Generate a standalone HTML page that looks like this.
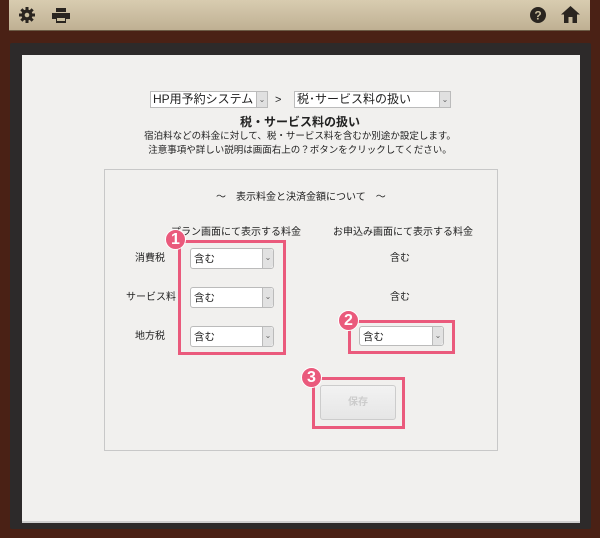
<!DOCTYPE html>
<html><head><meta charset="utf-8"><style>
*{margin:0;padding:0;box-sizing:border-box}
body{width:600px;height:538px;overflow:hidden;background:#4a2115;font-family:"Liberation Sans","Noto Sans CJK JP",sans-serif;position:relative}
.abs{position:absolute}
.top{left:9px;top:0;width:581px;height:31px;background:linear-gradient(#d8ccb0,#bfb093);border-bottom:1px solid #6b5a44}
.panel{left:10px;top:43px;width:581px;height:486px;background:#2d2a2a;border-radius:2px}
.paper{left:22px;top:55px;width:558px;height:466px;background:#f1f0ee;box-shadow:0 2px 0 #cfcfcf}
.sel{position:absolute;background:#fff;border:1px solid #bbb;font-size:12px;color:#222;padding-left:2px;line-height:15px;overflow:hidden}
.sel .ar{position:absolute;right:0;top:0;bottom:0;width:11px;background:#e0e0e0;border-left:1px solid #bbb;font-size:8px;text-align:center;color:#666}
.rsel{position:absolute;background:#fff;border:1px solid #bbb;border-radius:3px;font-size:10.5px;color:#222;padding-left:3px;padding-top:3px;line-height:14px;height:21px;overflow:hidden}
.rsel .ar{position:absolute;right:0;top:0;bottom:0;width:11px;background:#e2e2e2;border-left:1px solid #bbb;font-size:8px;text-align:center;color:#666;border-radius:0 3px 3px 0;line-height:18px}
.t{position:absolute;font-size:10px;color:#222;white-space:nowrap;line-height:12px}
.pk{position:absolute;border:3px solid #ea5a7c}
.bd{position:absolute;width:21px;height:21px;border-radius:50%;background:#ea5a7c;color:#fff;font-weight:bold;font-size:16px;text-align:center;line-height:19px;border:1px solid #fff}
</style></head><body>
<div class="abs top"></div>
<svg class="abs" style="left:19px;top:7px" width="16" height="16" viewBox="0 0 16 16"><g fill="#2a2520"><circle cx="8" cy="8" r="5.5"/><rect x="6.5" y="0" width="3" height="16"/><rect x="0" y="6.5" width="16" height="3"/><rect x="6.5" y="0" width="3" height="16" transform="rotate(45 8 8)"/><rect x="6.5" y="0" width="3" height="16" transform="rotate(-45 8 8)"/></g><circle cx="8" cy="8" r="2.3" fill="#cbbf9f"/></svg>
<svg class="abs" style="left:52px;top:8px" width="18" height="15" viewBox="0 0 18 15"><g fill="#2a2520"><rect x="4" y="0" width="10" height="4"/><rect x="0" y="5" width="18" height="6"/><rect x="4" y="9" width="10" height="6"/></g><rect x="5" y="10" width="8" height="3" fill="#cbbf9f"/></svg>
<svg class="abs" style="left:530px;top:7px" width="16" height="16" viewBox="0 0 16 16"><circle cx="8" cy="8" r="8" fill="#2a2520"/><text x="8" y="12.5" font-size="12" font-weight="bold" fill="#cbbf9f" text-anchor="middle" font-family="Liberation Sans">?</text></svg>
<svg class="abs" style="left:561px;top:6px" width="19" height="17" viewBox="0 0 19 17"><path d="M9.5 0 L19 8.5 H16 V17 H11.5 V11 H7.5 V17 H3 V8.5 H0 Z" fill="#2a2520"/></svg>
<div class="abs panel"></div>
<div class="abs paper"></div>
<div class="sel" style="left:150px;top:91px;width:118px;height:17px">HP用予約システム<span class="ar">⌄</span></div>
<div class="t" style="left:275px;top:94px;font-size:11px">&gt;</div>
<div class="sel" style="left:294px;top:91px;width:157px;height:17px">税･サービス料の扱い<span class="ar">⌄</span></div>
<div class="t" style="left:0;width:600px;text-align:center;top:115px;font-size:12px;font-weight:bold;line-height:14px">税・サービス料の扱い</div>
<div class="t" style="left:0;width:600px;text-align:center;top:131px;font-size:9.5px">宿泊料などの料金に対して、税・サービス料を含むか別途か設定します。</div>
<div class="t" style="left:0;width:600px;text-align:center;top:145px;font-size:9.5px">注意事項や詳しい説明は画面右上の？ボタンをクリックしてください。</div>
<div class="abs" style="left:104px;top:169px;width:394px;height:282px;border:1px solid #c8c8c8"></div>
<div class="t" style="left:216px;top:192px">～　表示料金と決済金額について　～</div>
<div class="t" style="left:171px;top:227px">プラン画面にて表示する料金</div>
<div class="t" style="left:333px;top:227px">お申込み画面にて表示する料金</div>
<div class="t" style="left:135px;top:253px">消費税</div>
<div class="t" style="left:126px;top:292px">サービス料</div>
<div class="t" style="left:135px;top:331px">地方税</div>
<div class="rsel" style="left:190px;top:248px;width:84px">含む<span class="ar">⌄</span></div>
<div class="rsel" style="left:190px;top:287px;width:84px">含む<span class="ar">⌄</span></div>
<div class="rsel" style="left:190px;top:326px;width:84px">含む<span class="ar">⌄</span></div>
<div class="t" style="left:390px;top:253px">含む</div>
<div class="t" style="left:390px;top:292px">含む</div>
<div class="rsel" style="left:359px;top:326px;width:85px;height:20px">含む<span class="ar">⌄</span></div>
<div class="abs" style="left:320px;top:385px;width:76px;height:35px;border:1px solid #ccc;border-radius:3px;background:linear-gradient(#f2f2f2,#e6e6e6);color:#ccc;font-size:10px;font-weight:bold;text-align:center;line-height:33px">保存</div>
<div class="pk" style="left:178px;top:240px;width:108px;height:115px"></div>
<div class="pk" style="left:348px;top:320px;width:107px;height:34px"></div>
<div class="pk" style="left:312px;top:377px;width:93px;height:52px"></div>
<div class="bd" style="left:165px;top:229px">1</div>
<div class="bd" style="left:338px;top:310px">2</div>
<div class="bd" style="left:301px;top:367px">3</div>
</body></html>
